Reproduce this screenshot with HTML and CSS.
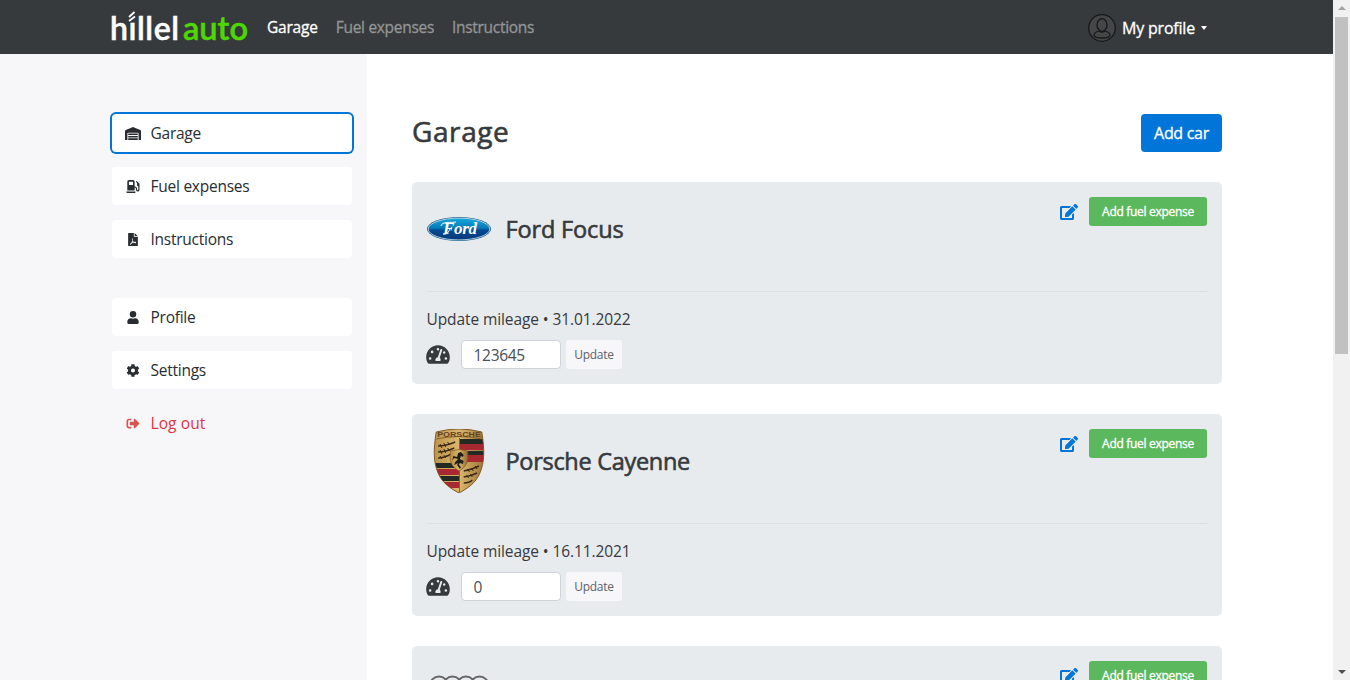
FILE: index.html
```html
<!DOCTYPE html>
<html lang="en">
<head>
<meta charset="utf-8">
<title>Hillel Auto - Garage</title>
<link rel="stylesheet" href="styles.css">
</head>
<body>
<svg class="sprite" aria-hidden="true">
  <symbol id="warehouse" viewBox="0 0 640 512"><path d="M504 352H136c-4 0-8 4-8 8v48c0 4 4 8 8 8h368c4 0 8-4 8-8v-48c0-4-4-8-8-8zm0 96H136c-4 0-8 4-8 8v48c0 4 4 8 8 8h368c4 0 8-4 8-8v-48c0-4-4-8-8-8zm0-192H136c-4 0-8 4-8 8v48c0 4 4 8 8 8h368c4 0 8-4 8-8v-48c0-4-4-8-8-8zm107-139L338 4c-12-5-25-5-37 0L29 117C12 125 0 142 0 161v343c0 4 4 8 8 8h80c4 0 8-4 8-8V256c0-18 15-32 33-32h382c18 0 33 14 33 32v248c0 4 4 8 8 8h80c4 0 8-4 8-8V161c0-19-12-36-29-44z"/></symbol>
  <symbol id="pump" viewBox="0 0 512 512"><path d="M336 448H16c-9 0-16 7-16 16v32c0 9 7 16 16 16h320c9 0 16-7 16-16v-32c0-9-7-16-16-16zm157-320-82-82c-6-6-16-6-22 0l-12 12c-6 6-6 16 0 22l39 39v73c0 28 21 51 48 55v129c0 13-11 24-24 24s-24-11-24-24v-32c0-49-39-88-88-88h-8V64c0-35-29-64-64-64H96C61 0 32 29 32 64v352h288V304h8c22 0 40 18 40 40v27c0 40 28 75 67 79 42 4 77-29 77-70V174c0-17-7-34-19-46zm-237 64H96V64h160v128z"/></symbol>
  <symbol id="pdf" viewBox="0 0 384 512"><path fill-rule="evenodd" d="M0 24C0 11 11 0 24 0h200v128c0 17 15 32 32 32h128v328c0 13-11 24-24 24H24c-13 0-24-11-24-24V24zm256-24 128 128H256V0zM160 206c-14 20-6 64 8 93-16 39-32 71-47 96-34 17-62 38-53 60 24 20 57-15 81-53 24-8 48-14 73-19 24 15 73 28 87 10 16-26-10-52-78-44-21-13-37-34-48-55 9-45 9-84-23-88zm14 28c8 12 4 27 1 43-6-18-7-33-1-43zm13 88c8 14 18 26 30 36l-46 14 16-50zm64 52c27-3 46 4 44 12-13 3-28-3-44-12zm-133 44c-14 19-26 28-33 28 1-10 16-21 33-28z"/></symbol>
  <symbol id="user" viewBox="0 0 448 512"><path d="M224 256a128 128 0 1 0 0-256 128 128 0 0 0 0 256zm90 32h-17c-45 21-101 21-146 0h-17C60 288 0 348 0 422v42c0 27 21 48 48 48h352c27 0 48-21 48-48v-42c0-74-60-134-134-134z"/></symbol>
  <symbol id="cog" viewBox="0 0 512 512"><path d="m487 316-42-25c4-23 4-47 0-70l42-25c5-3 7-9 6-14-12-36-31-68-56-95-3-4-10-5-15-2l-42 24c-18-15-39-27-61-35V25c0-6-4-11-10-12-36-8-74-8-110 0-6 1-10 6-10 12v49c-22 8-43 20-61 35L86 85c-5-3-12-2-15 2-25 27-44 59-56 95-1 5 1 11 6 14l42 25c-4 23-4 47 0 70l-42 25c-5 3-7 9-6 14 12 36 31 68 56 95 3 4 10 5 15 2l42-24c18 15 39 27 61 35v49c0 6 4 11 10 12 36 8 74 8 110 0 6-1 10-6 10-12v-49c22-8 43-20 61-35l42 24c5 3 12 2 15-2 25-27 44-59 56-95 1-5-1-11-6-14zM256 336a80 80 0 1 1 0-160 80 80 0 0 1 0 160z"/></symbol>
  <symbol id="exit" viewBox="0 0 512 512"><path d="M497 273 329 441c-15 15-41 4-41-17v-96H152c-13 0-24-11-24-24v-96c0-13 11-24 24-24h136V88c0-21 26-32 41-17l168 168c9 9 9 25 0 34zM192 436v-40c0-7-5-12-12-12H96c-18 0-32-14-32-32V160c0-18 14-32 32-32h84c7 0 12-5 12-12V76c0-7-5-12-12-12H96c-53 0-96 43-96 96v192c0 53 43 96 96 96h84c7 0 12-5 12-12z"/></symbol>
  <symbol id="edit" viewBox="0 0 576 512"><path d="m403 83 90 90c4 4 4 10 0 14L274 406l-93 10c-12 2-23-9-21-21l10-93L389 83c4-4 10-4 14 0zm162-23-49-49c-15-15-40-15-55 0l-35 36c-4 4-4 10 0 14l90 90c4 4 10 4 14 0l35-36c15-15 15-40 0-55zM384 346v102H64V128h230c3 0 6-1 9-4l40-40c7-7 2-20-9-20H48C21 64 0 86 0 112v352c0 27 21 48 48 48h352c27 0 48-21 48-48V306c0-11-13-16-21-9l-39 40c-3 3-4 6-4 9z"/></symbol>
  <symbol id="gauge" viewBox="0 0 576 512"><path fill-rule="evenodd" d="M288 32C129 32 0 161 0 320c0 53 14 102 39 145 6 10 16 15 27 15h444c11 0 21-5 27-15 25-43 39-92 39-145C576 161 447 32 288 32zm0 64c15 0 27 10 31 23l-10 31c-6 5-13 10-21 10a32 32 0 1 1 0-64zM96 384a32 32 0 1 1 0-64 32 32 0 0 1 0 64zm48-160a32 32 0 1 1 0-64 32 32 0 0 1 0 64zm247-72-61 184c13 12 22 28 22 48 0 12-3 23-9 32H233c-6-9-9-20-9-32 0-34 27-62 61-64l61-183c4-13 17-20 30-16s20 18 15 31zm15 58 21-32c2-1 3-2 5-2a32 32 0 1 1-26 34zm74 174a32 32 0 1 1 0-64 32 32 0 0 1 0 64z"/></symbol>
</svg>
<div class="window">
<div class="page">
  <header class="header">
    <svg class="logo" viewBox="0 0 136 32" role="img" aria-label="hillel auto">
      <text class="logo-white" x="-1" y="29.500" textLength="69">hıllel</text>
      <text class="logo-green" x="72" y="29.500" textLength="65" lengthAdjust="spacingAndGlyphs">auto</text>
      <path class="flame" d="m18 11 6-4.500M18 7l5.500-5"/>
    </svg>
    <nav class="nav">
      <a class="nav-link current">Garage</a>
      <a class="nav-link">Fuel expenses</a>
      <a class="nav-link">Instructions</a>
    </nav>
    <div class="account">
      <svg class="avatar" viewBox="0 0 28 28"><circle cx="14" cy="14" r="13.300"/><ellipse cx="14" cy="11" rx="5" ry="6.300"/><path d="M11 17c-3 1-5 2-5 4 0 4 16 4 16 0 0-2-2-3-5-4-2 1.500-4 1.500-6 0z"/></svg>
      <span class="account-name">My profile</span><i class="caret"></i>
    </div>
  </header>
  <div class="body">
    <aside class="sidebar">
      <a class="side-link active"><svg><use href="#warehouse"/></svg><span>Garage</span></a>
      <a class="side-link"><svg><use href="#pump"/></svg><span>Fuel expenses</span></a>
      <a class="side-link"><svg><use href="#pdf"/></svg><span>Instructions</span></a>
      <a class="side-link second-group"><svg><use href="#user"/></svg><span>Profile</span></a>
      <a class="side-link"><svg><use href="#cog"/></svg><span>Settings</span></a>
      <a class="side-link logout"><svg><use href="#exit"/></svg><span>Log out</span></a>
    </aside>
    <main class="main">
      <div class="heading"><h1>Garage</h1><button class="btn add-car">Add car</button></div>

      <section class="car">
        <div class="car-head">
          <svg class="brand" viewBox="0 0 64 64">
            <defs><linearGradient id="blue" x2="0" y2="1"><stop stop-color="#16a9dc"/><stop offset=".45" stop-color="#087bbb"/><stop offset=".55" stop-color="#054b91"/><stop offset="1" stop-color="#06377c"/></linearGradient></defs>
            <ellipse cx="32" cy="32" rx="32" ry="12" fill="#125b8d"/>
            <ellipse cx="32" cy="32" rx="30.800" ry="10.900" fill="url(#blue)" stroke="#d6e7ef" stroke-width=".8"/>
            <text class="ford" x="16" y="37" textLength="34">Ford</text>
            <path d="M14 29c1-5 10-3 15-4M16 37c4 1 6-2 7-6" fill="none" stroke="#fff"/>
          </svg>
          <h2>Ford Focus</h2>
          <div class="actions"><svg class="edit"><use href="#edit"/></svg><button class="btn add-fuel">Add fuel expense</button></div>
        </div>
        <p class="mileage">Update mileage • 31.01.2022</p>
        <form class="mileage-form"><svg class="gauge"><use href="#gauge"/></svg><input value="123645"><button type="button" class="btn update">Update</button></form>
      </section>

      <section class="car">
        <div class="car-head">
          <svg class="brand" viewBox="0 0 64 64">
            <defs>
              <linearGradient id="gold"><stop stop-color="#b88c43"/><stop offset=".5" stop-color="#d9b86e"/><stop offset="1" stop-color="#91662b"/></linearGradient>
              <clipPath id="crest"><path d="M8 3q24-6 48 0c3 18 3 30-2 41-4 10-14 16-22 20C24 60 14 54 10 44 5 33 5 21 8 3z"/></clipPath>
            </defs>
            <g transform="translate(1.600) scale(.95 1)">
            <g clip-path="url(#crest)">
              <path fill="url(#gold)" d="M0 0h64v64H0z"/>
              <path fill="#222a23" d="M33 10h25v5H33zm0 12h25v4H33zM5 34h27v5H5zm0 13h27v5H5z"/>
              <path fill="#a82832" d="M33 15h25v6H33zm0 11h25v7H33zM5 40h27v6H5zm0 13h27v6H5z"/>
              <path d="M10 17q8 0 18-4M10 23q8 0 17-4M10 29q6 0 14-4M37 42q8-1 16-5M37 48q8-1 14-4M37 54q6 0 9-3" fill="none" stroke="#3c2817" stroke-width="1.400"/>
              <path d="M12 15l2 4M16 14l2 4M20 13l2 3M12 21l2 4M16 20l2 4M20 19l2 3M12 27l2 3M16 26l2 3M41 40l2 3M45 39l2 3M49 37l2 3M40 46l2 3M44 45l2 3" stroke="#3c2817"/>
              <path fill="none" stroke="#875e28" d="M8 10q24-5 48 0M32.500 9v54"/>
            </g>
            <path d="M8 3q24-6 48 0c3 18 3 30-2 41-4 10-14 16-22 20C24 60 14 54 10 44 5 33 5 21 8 3z" fill="none" stroke="#80571f"/>
            <text class="porsche" x="9" y="8.200" textLength="46" lengthAdjust="spacingAndGlyphs">PORSCHE</text>
            <path fill="url(#gold)" stroke="#80571f" stroke-width=".7" d="M23 22q9-3 18 0c1 10 0 15-9 20-9-5-10-10-9-20z"/>
            <path fill="#211d19" d="m34 23 3 3-1 2-2-1-1 3 4 2-1 3-3-1-1 2 2 2-1 2-3-4 1-2-4 2 1-3 3-3-4-1-2 2 1-4 4 1 1-4z"/>
            </g>
          </svg>
          <h2 class="long-name">Porsche Cayenne</h2>
          <div class="actions"><svg class="edit"><use href="#edit"/></svg><button class="btn add-fuel">Add fuel expense</button></div>
        </div>
        <p class="mileage">Update mileage • 16.11.2021</p>
        <form class="mileage-form"><svg class="gauge"><use href="#gauge"/></svg><input value="0"><button type="button" class="btn update">Update</button></form>
      </section>

      <section class="car">
        <div class="car-head">
          <svg class="brand" viewBox="0 0 64 64"><g fill="none" stroke="#666" stroke-width="2"><circle cx="12" cy="24.500" r="9"/><circle cx="25.500" cy="24.500" r="9"/><circle cx="39" cy="24.500" r="9"/><circle cx="52.500" cy="24.500" r="9"/></g></svg>
          <div class="actions"><svg class="edit"><use href="#edit"/></svg><button class="btn add-fuel">Add fuel expense</button></div>
        </div>
      </section>
    </main>
  </div>
</div>
<div class="scrollbar"><i class="arrow up"></i><div class="thumb"></div><i class="arrow down"></i></div>
</div>
</body>
</html>
```
FILE: styles.css
```css
* { box-sizing: border-box; }
body { margin: 0; overflow: hidden; font: 16px/24px "Open Sans", "Noto Sans", sans-serif; color: #212529; }
.sprite { display: none; }
svg { fill: currentColor; flex-shrink: 0; }
.window { display: flex; height: 680px; overflow: hidden; }
.page { width: 1333px; height: 680px; overflow: hidden; }
.header { display: flex; align-items: center; height: 54px; padding: 0 126px 0 111px; background: #373a3c; color: #fff; }
.logo { width: 136px; height: 32px; overflow: visible; margin-top: -2px; }
.logo text { font: 600 32px Lato, sans-serif; stroke-width: .5px; }
.logo-white { fill: #fff; stroke: #fff; }
.logo-green { fill: #4fd700; stroke: #4fd700; }
.flame { stroke: #fff; stroke-width: 1.8; }
.nav { display: flex; gap: 18px; margin: 0 0 0 20px; }
.nav-link { color: #939596; font-size: 15.5px; letter-spacing: -.3px; white-space: nowrap; -webkit-text-stroke: .3px; }
.nav-link.current { color: #fff; letter-spacing: -.2px; }
.account { display: flex; align-items: center; margin: 1px 0 0 auto; }
.avatar { width: 28px; height: 28px; margin-right: 6px; fill: #444647; stroke: #171819; stroke-width: 1.3; }
.account-name { letter-spacing: -.2px; -webkit-text-stroke: .3px; }
.caret { margin-left: 6px; border: solid transparent; border-width: 4px 3.5px 0; border-top-color: #fff; }
.body { display: flex; height: 626px; }
.sidebar { display: flex; flex-direction: column; gap: 15px; width: 367px; padding: 60px 15px 0 112px; background: #f7f7f9; }
.side-link { display: flex; align-items: center; height: 38px; padding-left: 12.5px; background: #fff; border-radius: 4px; color: #292d31; }
.side-link svg { width: 16px; height: 13px; margin-right: 10px; }
.side-link span { font-size: 15.5px; letter-spacing: -.25px; }
.side-link.active { box-shadow: 0 0 0 2px #0275d8; }
.second-group { margin-top: 25px; }
.logout { background: transparent; color: #dc3545; }
.side-link.logout span { letter-spacing: .1px; }
.logout svg { color: #d9534f; }
.main { width: 855px; padding: 60px 0 0 45px; }
.heading { display: flex; justify-content: space-between; height: 68px; }
h1, h2 { margin: 0; color: #373a3c; font-weight: 400; white-space: nowrap; -webkit-text-stroke: .6px; }
h1 { font-size: 28px; line-height: 35px; letter-spacing: .6px; }
h2 { margin: 33px 0 0 14.5px; font-size: 23.5px; line-height: 29px; letter-spacing: -.15px; }
.long-name { letter-spacing: -.3px; }
.btn { border: 0; border-radius: 4px; font-family: inherit; white-space: nowrap; padding: 0; color: #fff; }
.add-car { width: 81px; height: 38px; background: #0275d8; font-size: 16px; letter-spacing: -.3px; -webkit-text-stroke: .3px; }
.car { height: 202px; margin-bottom: 30px; padding: 0 15px; border-radius: 5px; background: #e7ebee; color: #373a3c; }
.car-head { display: flex; height: 110px; border-bottom: 1px solid #dde0e3; }
.brand { width: 64px; height: 64px; margin-top: 15px; }
.ford { font: italic bold 17px "Liberation Serif", serif; fill: #fff; }
.porsche { font: bold 6.5px "Liberation Sans", sans-serif; fill: #634321; }
.actions { display: flex; gap: 11px; margin: 15px 0 0 auto; }
.edit { width: 18px; height: 16px; margin-top: 7px; color: #0275d8; }
.add-fuel { width: 118px; height: 29px; border-radius: 3px; background: #5cb85c; font-size: 12px; letter-spacing: -.3px; -webkit-text-stroke: .3px; }
.mileage { margin: 15px 0 9px -.5px; font-size: 15.5px; letter-spacing: -.1px; }
.mileage-form { display: flex; align-items: center; height: 29px; }
.gauge { width: 24px; height: 21px; margin: 0 11px 0 -1px; }
.mileage-form input { width: 100px; height: 29px; padding: 1px 12px 0 11.5px; border: 1px solid #ced4da; border-radius: 4px; color: #495057; font: 15.5px "Open Sans", sans-serif; letter-spacing: -.3px; }
.update { width: 56px; height: 29px; margin-left: 5px; border-radius: 3px; background: #f7f7f9; color: #5c6268; font-size: 12px; letter-spacing: -.3px; }
.scrollbar { display: flex; flex-direction: column; align-items: center; width: 17px; height: 680px; background: #f1f1f1; }
.thumb { width: 13px; height: 337px; margin-top: 7px; background: #c1c1c1; }
.arrow { border: solid transparent; border-width: 0 4px; }
.up { margin-top: 6px; border-bottom: 4px solid #a3a3a3; }
.down { margin: auto 0 6px; border-top: 4px solid #505050; }
```
